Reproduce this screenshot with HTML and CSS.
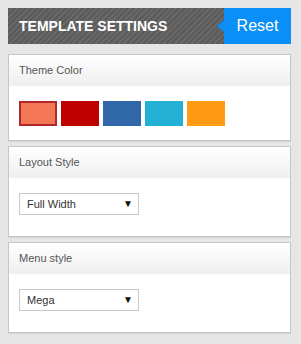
FILE: index.html
```html
<!DOCTYPE html>
<html>
  <head>
    <meta name="viewport" content="width=device-width, initial-scale=1">
    <link rel="stylesheet" href="styles.css">
  </head>
  <body>
    <div class="bar">
      <h1>TEMPLATE SETTINGS</h1>
      <a class="reset">Reset</a>
    </div>

    <div class="panel">
      <div class="head">Theme Color</div>
      <div class="body swatches">
        <span class="swatch active" style="background:#f47755"></span>
        <span class="swatch" style="background:#bf0000"></span>
        <span class="swatch" style="background:#2f67a8"></span>
        <span class="swatch" style="background:#22b0d4"></span>
        <span class="swatch" style="background:#ff9a14"></span>
      </div>
    </div>

    <div class="panel">
      <div class="head">Layout Style</div>
      <div class="body">
        <div class="select">Full Width <span class="caret">&#9660;</span></div>
      </div>
    </div>

    <div class="panel">
      <div class="head">Menu style</div>
      <div class="body">
        <div class="select">Mega <span class="caret">&#9660;</span></div>
      </div>
    </div>
  </body>
</html>
```

FILE: styles.css
```css
body { background: #e6e6e6; margin: 8px 10px 8px 8px; font-family: "Liberation Sans", Arial, sans-serif }
.bar { display: flex; height: 36px; background: repeating-linear-gradient(135deg, #5b5b5b 0, #5b5b5b 2px, #686868 2px, #686868 4px); margin-bottom: 10px }
.bar h1 { flex: 1; margin: 0; padding-left: 11px; color: white; font-size: 14px; font-weight: bold; line-height: 36px }
.reset { position: relative; width: 67px; background: #0a8ff8; color: white; font-size: 16px; line-height: 35px; text-align: center }
.reset:before { content: ""; position: absolute; left: -7px; top: 12px; border-style: solid; border-width: 6px 7px 6px 0; border-color: transparent #0a8ff8 transparent transparent }
.panel { background: white; border: 1px solid #c6c6c6; margin-bottom: 5px; box-shadow: 0 1px 1px rgba(0,0,0,0.08) }
.head { height: 31px; line-height: 31px; padding-left: 10px; font-size: 11px; color: #555; background: linear-gradient(#ffffff, #efefef) }
.body { padding: 15px 10px 21px }
.swatches { display: flex; gap: 4px; padding-bottom: 14px }
.swatch { width: 38px; height: 25px; box-sizing: border-box }
.swatch.active { border: 2px solid #b3262a }
.select { display: flex; justify-content: space-between; width: 120px; height: 22px; box-sizing: border-box; border: 1px solid #c8c8c8; padding: 0 5px 0 7px; font-size: 11px; line-height: 20px; color: #333 }
.caret { font-size: 10px; color: #111 }
```
